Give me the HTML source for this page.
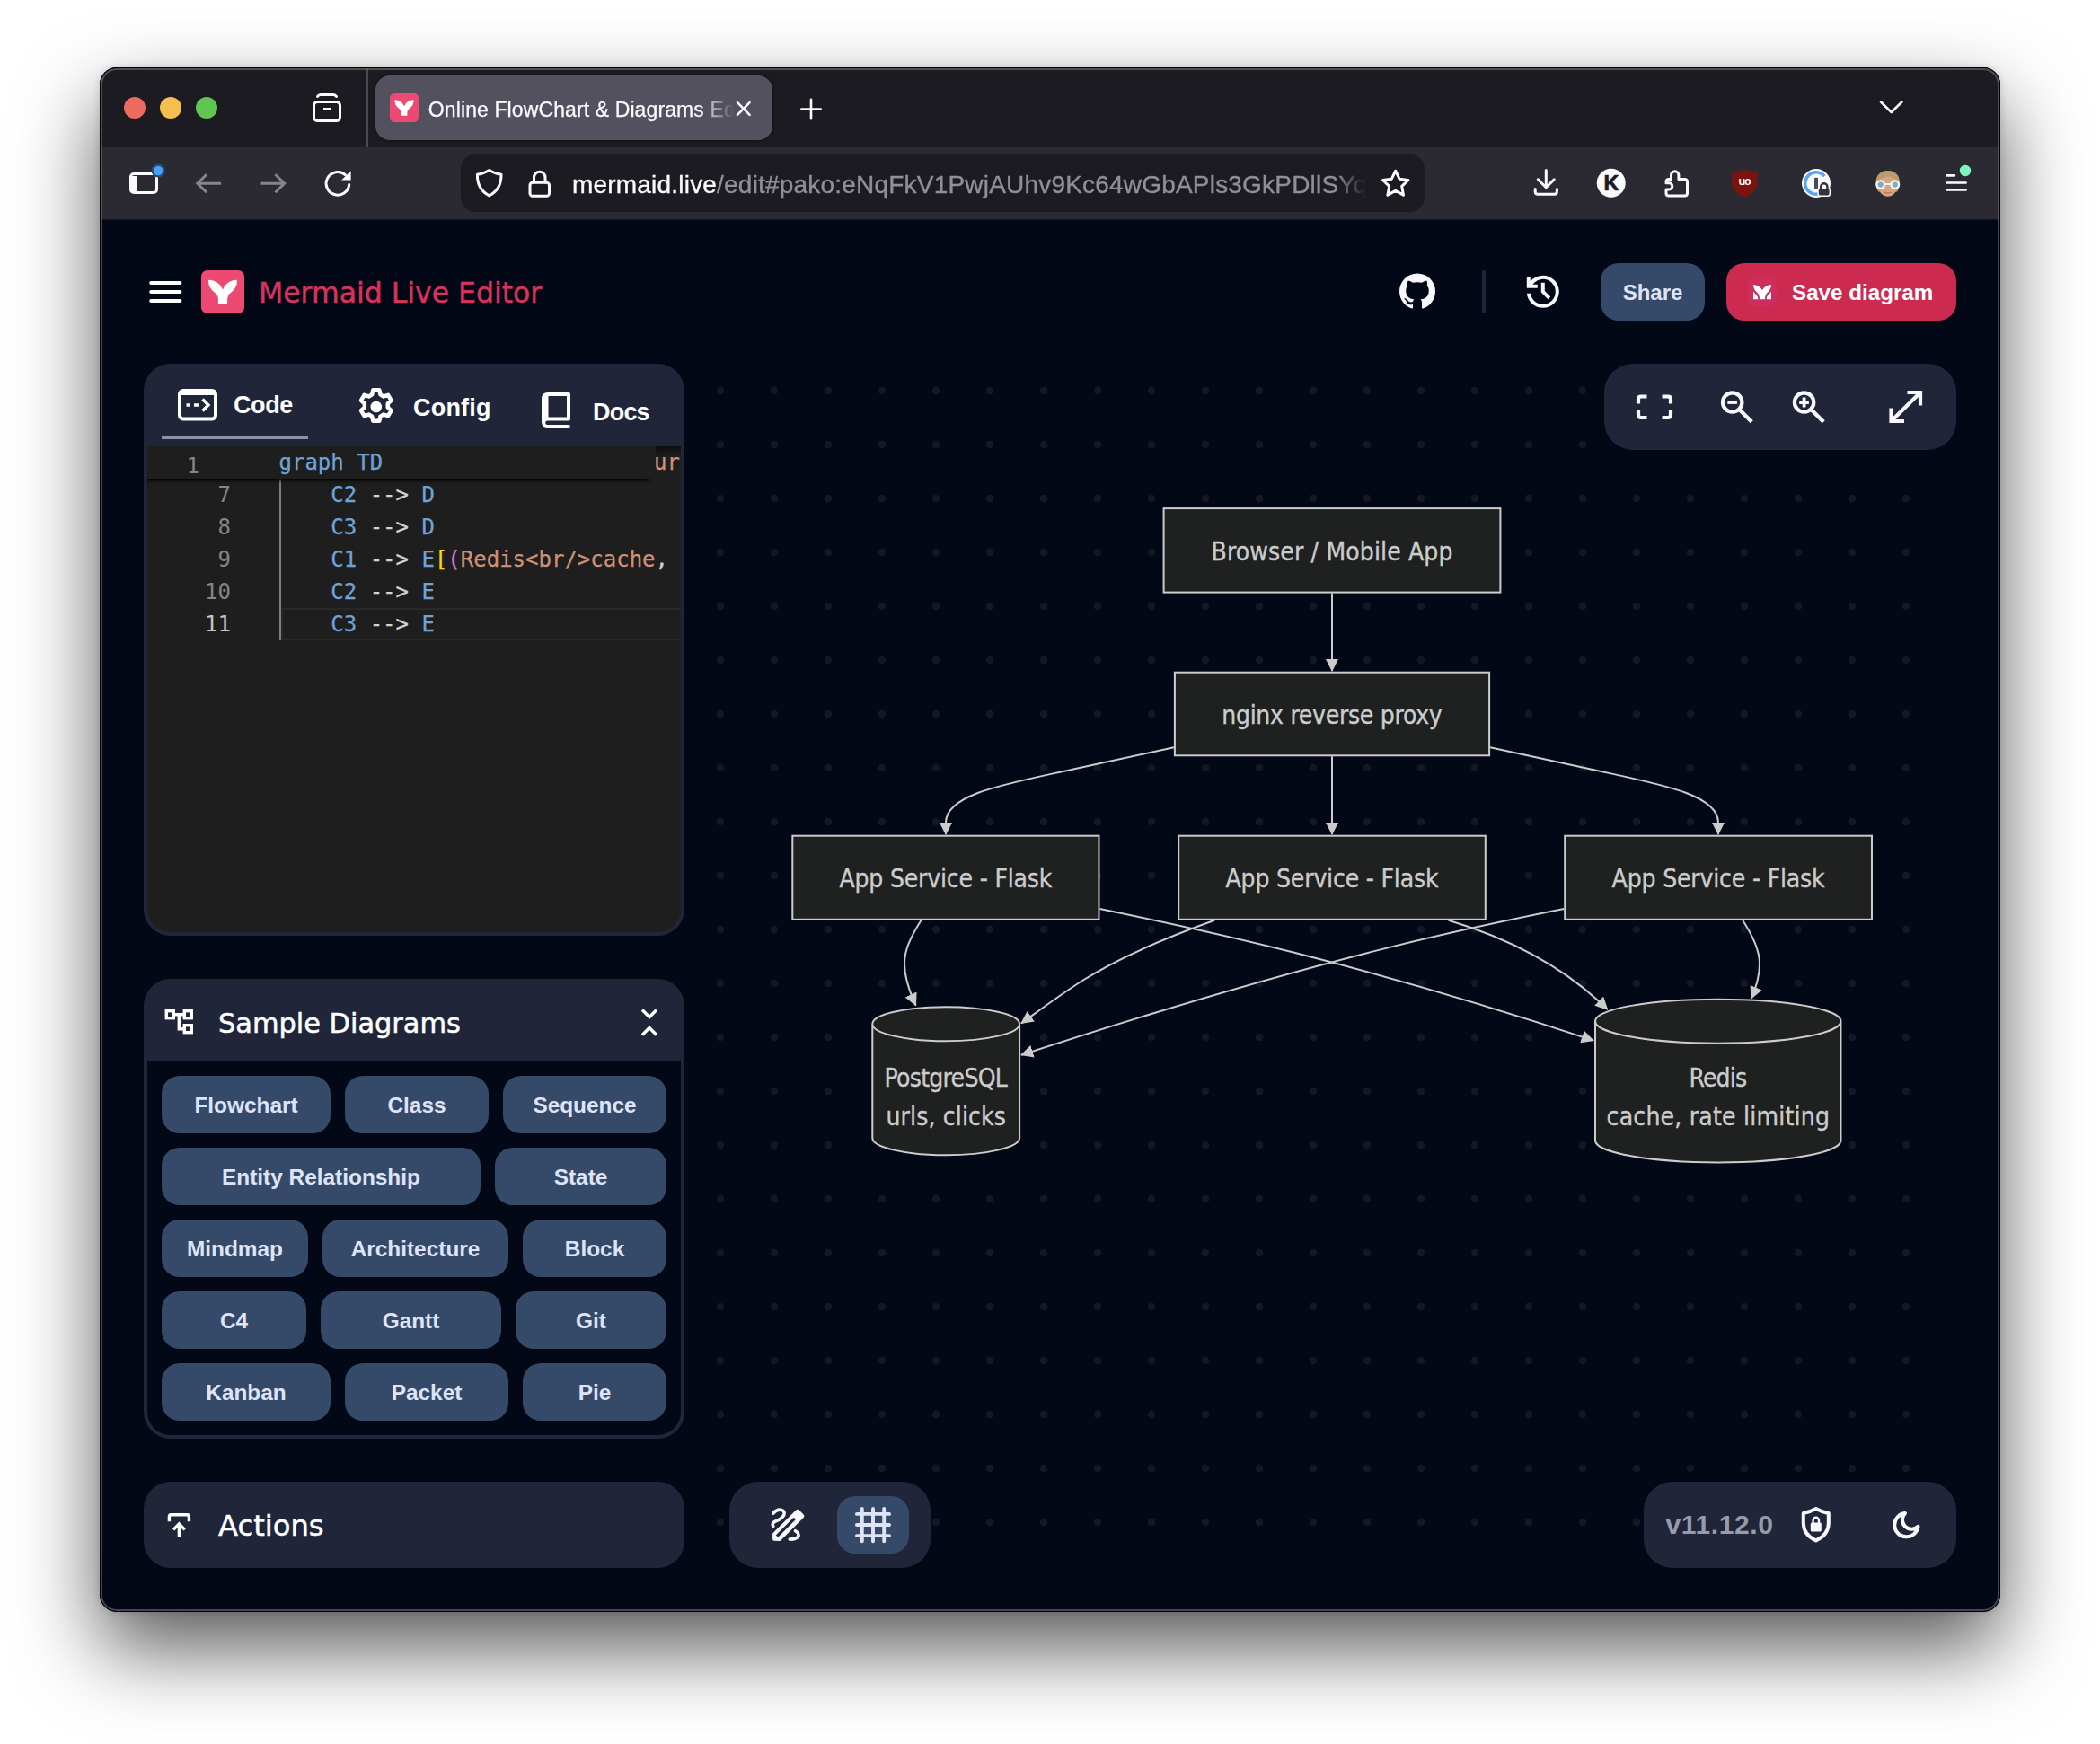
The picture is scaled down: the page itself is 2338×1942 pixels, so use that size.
<!DOCTYPE html>
<html lang="en">
<head>
<meta charset="utf-8">
<title>Online FlowChart &amp; Diagrams Editor - Mermaid Live Editor</title>
<style>
*{box-sizing:border-box;margin:0;padding:0}
html,body{width:2338px;height:1942px;overflow:hidden;background:#fff}
body{position:relative;font-family:"Liberation Sans",sans-serif;color:#fff}
.abs{position:absolute}
svg{position:absolute;overflow:visible}
/* window */
#shadow{left:111px;top:75px;width:2116px;height:1720px;border-radius:19px;
  box-shadow:0 41px 90px rgba(0,0,0,.65),0 0 8px rgba(0,0,0,.15);}
#win{left:0;top:0;width:2338px;height:1942px;clip-path:inset(75px 111px 147px 111px round 19px);background:#030817}
#ring{left:111px;top:75px;width:2116px;height:1720px;border-radius:19px;border:1px solid #000;box-shadow:inset 0 0 0 2px rgba(120,120,132,.55);pointer-events:none}
/* browser chrome */
#tabbar{left:111px;top:75px;width:2116px;height:89px;background:#1c1b22}
#toolbar{left:111px;top:164px;width:2116px;height:81px;background:#2b2a33;border-bottom:1px solid #16151b}
.tl{width:24px;height:24px;border-radius:50%;top:108px}
#tab{left:418px;top:84px;width:442px;height:72px;border-radius:16px;background:#52515d;box-shadow:0 0 4px rgba(0,0,0,.5)}
#tabtitle{left:476.800px;top:105.500px;width:343px;height:32px;font-size:23px;line-height:32px;letter-spacing:.110px;white-space:nowrap;overflow:hidden;color:#fbfbfe;-webkit-text-stroke:.250px #fbfbfe;
  -webkit-mask-image:linear-gradient(90deg,#000 0,#000 298px,rgba(0,0,0,.12) 336px,transparent 340px);mask-image:linear-gradient(90deg,#000 0,#000 298px,rgba(0,0,0,.12) 336px,transparent 340px)}
#urlbar{left:513px;top:172px;width:1073px;height:64px;border-radius:16px;background:#1c1b22}
#url{left:637px;top:185.600px;width:886px;height:40px;font-size:28px;line-height:40px;letter-spacing:.200px;white-space:nowrap;overflow:hidden;color:#8f8f99;-webkit-text-stroke:.350px currentColor;
  -webkit-mask-image:linear-gradient(90deg,#000 0,#000 850px,transparent 884px);mask-image:linear-gradient(90deg,#000 0,#000 850px,transparent 884px)}
#url b{font-weight:400;color:#fbfbfe;-webkit-text-stroke:.350px #fbfbfe}
/* app header */
#title{left:288px;top:302.200px;-webkit-text-stroke:.450px #d7335c;height:48px;line-height:48px;font-family:"DejaVu Sans","Liberation Sans",sans-serif;font-size:31.5px;color:#d7335c;white-space:nowrap}
.btn{border-radius:20px;background:#354a69;color:#dee3f7;font-family:"Liberation Sans",sans-serif;font-weight:700;font-size:24.400px;text-align:center;white-space:nowrap}

/* panels */
.panel{background:#20253a;border-radius:30px}
.tabtxt{font-family:"Liberation Sans",sans-serif;font-weight:700;font-size:27px;line-height:40px;height:40px;color:#fff;white-space:nowrap}
#editor{left:164px;top:497px;width:594px;height:541px;background:#1e1e1e;border-radius:0 0 26px 26px;overflow:hidden;font-family:"DejaVu Sans Mono","Liberation Mono",monospace;font-size:24px}
#editor .ln{position:absolute;left:0;width:93px;text-align:right;height:36px;line-height:37.600px;color:#858585}
#editor .cl{position:absolute;left:146.500px;height:36px;line-height:37.600px;white-space:pre;color:#d4d4d4;-webkit-text-stroke:.250px currentColor}
.k{color:#6ea3d8;-webkit-text-stroke:.250px #6ea3d8}.s{color:#ce9178;-webkit-text-stroke:.250px #ce9178}.y{color:#ffd700}.m{color:#da70d6}
#sticky{left:0;top:0;width:566px;height:36px;background:#1e1e1e;box-shadow:-6px 4px 4px -2px #000}
.ptitle{font-family:"DejaVu Sans","Liberation Sans",sans-serif;font-size:30.400px;line-height:48px;height:48px;color:#fff;white-space:nowrap;-webkit-text-stroke:.500px #fff}
.sbtn{height:64px;line-height:66.400px}

/* diagram pane */
#dots{left:772px;top:405px;width:1380px;height:1320px;background-image:radial-gradient(circle at 30px 30px,#161724 0,#161724 3.700px,rgba(22,23,36,0) 4.600px);background-size:60px 60px}
.pill{background:#20253a;border-radius:32px}
#diagram text{font-family:"DejaVu Sans Condensed","Liberation Sans",sans-serif;font-size:28px;fill:#ccc;text-anchor:middle;stroke:#ccc;stroke-width:.350px}
#diagram .node{fill:#1f2020;stroke:#ccc;stroke-width:2}
#diagram .edge{fill:none;stroke:#ccc;stroke-width:2}
#ver{left:1854.500px;top:1674px;height:48px;line-height:48px;font-family:"Liberation Sans",sans-serif;font-weight:700;font-size:30px;letter-spacing:.600px;color:#979cad;white-space:nowrap}
</style>
</head>
<body>
<div id="shadow" class="abs"></div>
<div id="win" class="abs">
  <!-- ===== browser chrome ===== -->
  <div id="tabbar" class="abs"></div>
  <div id="toolbar" class="abs"></div>
  <div class="abs tl" style="left:138px;background:#ed6a5e"></div>
  <div class="abs tl" style="left:178px;background:#f5bf4f"></div>
  <div class="abs tl" style="left:218px;background:#61c554"></div>
  <div class="abs" style="left:408px;top:75px;width:2px;height:89px;background:#4b4a54"></div>
  <div id="tab" class="abs"></div>
  <div id="tabtitle" class="abs">Online FlowChart &amp; Diagrams Editor - Mermaid Live Editor</div>
  <div id="urlbar" class="abs"></div>
  <div id="url" class="abs"><b>mermaid.live</b>/edit#pako:eNqFkV1PwjAUhv9Kc64wGbAPls3GkPDllSYqXlmaspXNbWxnBY2x/91mM4kX</div>
  
  <svg id="chrome-icons" width="2338" height="1942" viewBox="0 0 2338 1942" fill="none" stroke="#fbfbfe" stroke-width="3" stroke-linecap="round" stroke-linejoin="round">
    <!-- firefox view -->
    <rect x="349.5" y="113.5" width="29" height="21" rx="4"/>
    <path d="M353.5 107.5q1.2-2 3.5-2h14q2.3 0 3.5 2" />
    <path d="M360 121.500h8" stroke-linecap="butt"/>
    <!-- tab favicon -->
    <rect x="434" y="104" width="32" height="32" rx="5" fill="#ec4a72" stroke="none"/>
    <path transform="translate(434,104) scale(0.065285)" fill="#fff" stroke="none" d="M407.48,111.18A165.2,165.2,0,0,0,245.08,220,165.2,165.2,0,0,0,82.68,111.18a165.5,165.5,0,0,0,72.06,143.64,88.81,88.81,0,0,1,38.53,73.45v50.86H296.9V328.27a88.8,88.8,0,0,1,38.52-73.45,165.41,165.41,0,0,0,72.06-143.64Z"/>
    <!-- tab close / new tab / list tabs -->
    <path d="M821 114.200l13.600 13.600M834.600 114.200l-13.600 13.600" stroke-width="2.600"/>
    <path d="M892.300 121.500h21.400M903 110.800v21.400" stroke-width="2.600"/>
    <path d="M2094 113.500l11.700 11.500l11.700-11.500" stroke-width="2.6"/>
    <!-- sidebar -->
    <rect x="145.500" y="193.500" width="29" height="21" rx="3.500" />
    <path d="M145 196h7v17h-7z" fill="#fbfbfe" stroke="none"/>
    <circle cx="176.200" cy="190" r="7.600" fill="#2b4a68" stroke="none"/>
    <circle cx="176.200" cy="190" r="5.200" fill="#45a1ff" stroke="none"/>
    <!-- back / forward -->
    <g stroke="#86858e">
      <path d="M246 204.300h-26M230 194.300l-10.200 10l10.200 10" stroke-linecap="butt" stroke-linejoin="miter"/>
      <path d="M290.500 204.300h26M306.500 194.300l10.200 10l-10.200 10" stroke-linecap="butt" stroke-linejoin="miter"/>
    </g>
    <!-- reload -->
    <path d="M388.700 205.500a12.800 12.800 0 1 1-4.400-10.900"/>
    <path d="M390.600 190.200v10.200h-10.400z" fill="#fbfbfe" stroke="none"/>
    <!-- shield -->
    <path d="M544.700 189.500q7.500 4.200 13.300 4.700q.4 16.500-13.300 23.600q-13.700-7.100-13.300-23.600q5.800-.5 13.300-4.700z"/>
    <!-- lock -->
    <rect x="590" y="203.300" width="21.500" height="15" rx="3"/>
    <path d="M594.500 203v-5.500a6.200 6.200 0 0 1 12.500 0v5.500"/>
    <!-- star -->
    <path d="M1553.700 190.200l4.300 9l9.900 1.300l-7.200 6.900l1.800 9.800l-8.800-4.800l-8.800 4.800l1.800-9.800l-7.200-6.900l9.900-1.300z"/>
    <!-- download -->
    <path d="M1721.300 189.500v18.500M1712.300 199.800l9 9l9-9M1709.200 210.500v2.700q0 3 3 3h18.200q3 0 3-3v-2.700"/>
    <!-- K -->
    <circle cx="1793.700" cy="203.700" r="16" fill="#fbfbfe" stroke="none"/>
    <text x="1793.900" y="212" style="font:700 23.500px 'Liberation Sans',sans-serif" text-anchor="middle" fill="#1c1b22" stroke="#1c1b22" stroke-width=".700">K</text>
    <!-- extensions puzzle -->
    <path d="M1860.500 199.500v-4.500a4.200 4.200 0 0 1 8.400 0v4.500h6.600q3 0 3 3v12.500q0 3-3 3h-17.500q-3 0-3-3v-4h3.200a3.600 3.600 0 0 0 0-7.200h-3.200v-1.300q0-3 3-3z"/>
    <!-- uBlock -->
    <path d="M1942.200 187.800q4.500 3.600 14.200 4.500v12.200q-1 9.500-14.200 15.300q-13.200-5.800-14.200-15.300v-12.200q9.700-.900 14.200-4.500z" fill="#7b130e" stroke="none"/>
    <text x="1942" y="206.400" style="font:700 12.500px 'Liberation Sans',sans-serif;letter-spacing:-1.200px" text-anchor="middle" fill="#fff" stroke="none">uo</text>
    <!-- 1password-like -->
    <circle cx="2022" cy="204" r="16" fill="#fbfbfe" stroke="none"/>
    <path d="M2031.300 196.200a12.200 12.200 0 1 0-4.300 18.900" stroke="#5aa2f5" stroke-width="3.400" stroke-linecap="butt"/>
    <rect x="2020" y="197.900" width="4" height="12.300" fill="#4b4b52" stroke="none"/>
    <path d="M2027.200 210v-2.200a3.600 3.600 0 0 1 7.200 0v2.200" stroke="#fbfbfe" stroke-width="5.400"/>
    <rect x="2023.400" y="208.600" width="14.600" height="10.400" rx="3" fill="#fbfbfe" stroke="none"/>
    <path d="M2027.200 210v-2.200a3.600 3.600 0 0 1 7.200 0v2.200" stroke="#343338" stroke-width="2.400"/>
    <rect x="2024.800" y="210" width="11.800" height="7.600" rx="1.800" fill="#343338" stroke="none"/>
    <!-- avatar -->
    <path d="M2101.700 190c8.500 0 13.200 5.500 13.200 13c0 4-1.200 7.500-2.600 10.500h-21.200c-1.400-3-2.600-6.500-2.600-10.500c0-7.500 4.700-13 13.200-13z" fill="#b89c72" stroke="none"/>
    <path d="M2101.700 196.500c6.500 0 10.800 3.500 10.800 9.500c0 7-4.600 12.800-10.800 12.800s-10.800-5.800-10.800-12.800c0-6 4.300-9.500 10.800-9.500z" fill="#d9a47f" stroke="none"/>
    <path d="M2092 199q7-1.500 12-7q4 5.500 9 7.500q-3-9.500-11.300-9.500q-8.200 0-9.700 9z" fill="#b89c72" stroke="none"/>
    <path d="M2098 214.200q3.700 1.800 7.400 0" stroke="#b5785c" stroke-width="1.300"/>
    <circle cx="2093.700" cy="205.600" r="4.300" fill="#86aab8" stroke="#f4f8fa" stroke-width="2.300"/>
    <circle cx="2109.800" cy="205.600" r="4.300" fill="#86aab8" stroke="#f4f8fa" stroke-width="2.300"/>
    <path d="M2098.600 205h6.300" stroke="#f4f8fa" stroke-width="1.800"/>
    <!-- menu -->
    <path d="M2167.400 195.400h8.500M2167.400 203.500h21.200M2167.400 211.500h21.200" stroke-width="2.700"/>
    <circle cx="2188" cy="190" r="6.200" fill="#7df5bd" stroke="none"/>
  </svg>

  <!-- ===== app header ===== -->
  <div id="title" class="abs">Mermaid Live Editor</div>
  
  <svg id="header-icons" width="2338" height="1942" viewBox="0 0 2338 1942" fill="none">
    <path d="M168.300 315h32M168.300 325h32M168.300 335h32" stroke="#fff" stroke-width="4.200" stroke-linecap="round"/>
    <rect x="224" y="301" width="48" height="48" rx="6.800" fill="#ec4a72"/>
    <path transform="translate(224,301) scale(0.097927)" fill="#fff" d="M407.48,111.18A165.2,165.2,0,0,0,245.08,220,165.2,165.2,0,0,0,82.68,111.18a165.5,165.5,0,0,0,72.06,143.64,88.81,88.81,0,0,1,38.53,73.45v50.86H296.9V328.27a88.8,88.8,0,0,1,38.52-73.45,165.41,165.41,0,0,0,72.06-143.64Z"/>
    <path transform="translate(1554,300.500) scale(2)" fill="#f8f8fc" d="M12,2A10,10 0 0,0 2,12C2,16.42 4.87,20.17 8.84,21.5C9.34,21.58 9.5,21.27 9.5,21C9.5,20.77 9.5,20.14 9.5,19.31C6.73,19.91 6.14,17.97 6.14,17.97C5.68,16.81 5.03,16.5 5.03,16.5C4.12,15.88 5.1,15.9 5.1,15.9C6.1,15.97 6.63,16.93 6.63,16.93C7.5,18.45 8.97,18 9.54,17.76C9.63,17.11 9.89,16.67 10.17,16.42C7.95,16.17 5.62,15.31 5.62,11.5C5.62,10.39 6,9.5 6.65,8.79C6.55,8.54 6.2,7.5 6.75,6.15C6.75,6.15 7.59,5.88 9.5,7.17C10.29,6.95 11.15,6.84 12,6.84C12.85,6.84 13.71,6.95 14.5,7.17C16.41,5.88 17.25,6.15 17.25,6.15C17.8,7.5 17.45,8.54 17.35,8.79C18,9.5 18.38,10.39 18.38,11.5C18.38,15.32 16.04,16.16 13.81,16.41C14.17,16.72 14.5,17.33 14.5,18.26C14.5,19.6 14.5,20.68 14.5,21C14.5,21.27 14.66,21.59 15.17,21.5C19.14,20.16 22,16.42 22,12A10,10 0 0,0 12,2Z"/>
    <path d="M1652 303v44" stroke="#20253a" stroke-width="4" stroke-linecap="round"/>
    <path transform="translate(1693.800,300.800) scale(2)" fill="#f8f8fc" d="M12 21q-3.450 0-6.012-2.287T3.050 13H5.100q.350 2.600 2.313 4.300T12 19q2.925 0 4.963-2.037T19 12t-2.037-4.962T12 5q-1.725 0-3.225.800T6.250 8H9v2H3V4h2v2.350q1.275-1.600 3.113-2.475T12 3q1.875 0 3.513.713t2.850 1.924t1.925 2.850T21 12t-.712 3.513t-1.925 2.850t-2.850 1.925T12 21m2.800-4.800L11 12.400V7h2v4.600l3.200 3.200z"/>
  </svg>
  <div class="abs btn" style="left:1782px;top:293px;width:116px;height:64px;line-height:65.400px;font-size:24px">Share</div>
  <div class="abs btn" style="left:1922px;top:293px;width:256px;height:64px;line-height:65.400px;background:#cd2a50;color:#fff;text-align:left;padding-left:73px;font-size:24.200px">Save diagram</div>
  <svg width="32" height="32" viewBox="0 0 32 32" style="left:1946px;top:309px">
    <rect width="32" height="32" rx="6.500" fill="#cc2e5e"/>
    <g transform="translate(6,8)" fill="#fff">
      <path d="M0 0q6.500 .600 10 6q3.500-5.400 10-6q-.300 5.500-4.200 8.800q-2.500 2.200-2.700 5.200v2.200h-6.200v-2.200q-.200-3-2.700-5.200q-3.900-3.300-4.200-8.800z"/>
      <path d="M0 7.600q.900 1.500 2.500 2.900q2.600 2.300 2.700 4.700v1h-5.200z"/>
      <path d="M20 7.600q-.900 1.500-2.500 2.900q-2.600 2.300-2.700 4.700v1h5.200z"/>
    </g>
  </svg>

  
  <!-- ===== editor panel ===== -->
  <div class="abs panel" style="left:160px;top:405px;width:602px;height:637px"></div>
  <div class="abs tabtxt" style="left:260px;top:431px;letter-spacing:-.400px">Code</div>
  <div class="abs tabtxt" style="left:460px;top:433.500px;letter-spacing:.200px">Config</div>
  <div class="abs tabtxt" style="left:660px;top:438.500px;letter-spacing:-.800px">Docs</div>
  <div class="abs" style="left:180px;top:485px;width:163px;height:4px;background:#8c91a8"></div>
  <div id="editor" class="abs">
    <div class="ln" style="top:36px">7</div><div class="cl" style="top:36px"><span class="k">    C2</span> --&gt; <span class="k">D</span></div>
    <div class="ln" style="top:72px">8</div><div class="cl" style="top:72px"><span class="k">    C3</span> --&gt; <span class="k">D</span></div>
    <div class="ln" style="top:108px">9</div><div class="cl" style="top:108px"><span class="k">    C1</span> --&gt; <span class="k">E</span><span class="y">[</span><span class="m">(</span><span class="s">Redis&lt;br/&gt;cache</span>, <span class="s">rate limiting</span><span class="m">)</span><span class="y">]</span></div>
    <div class="ln" style="top:144px">10</div><div class="cl" style="top:144px"><span class="k">    C2</span> --&gt; <span class="k">E</span></div>
    <div class="abs" style="left:149px;top:180px;width:460px;height:36px;border:2px solid #282828"></div>
    <div class="ln" style="top:180px;color:#c6c6c6">11</div><div class="cl" style="top:180px"><span class="k">    C3</span> --&gt; <span class="k">E</span></div>
    <div class="abs" style="left:146.500px;top:36px;width:2px;height:180px;background:#7c7c7c"></div>
    <div class="abs" style="left:566px;top:0;width:28px;height:12px;background:linear-gradient(#0e0e0e,#1e1e1e)"></div><div class="cl" style="top:0;left:564px"><span class="s">ur</span></div>
    <div id="sticky" class="abs"><div class="ln" style="top:4px;width:58px;left:0">1</div><div class="cl" style="top:0"><span class="k">graph TD</span></div></div>
  </div>
  <!-- ===== sample diagrams panel ===== -->
  <div class="abs panel" style="left:160px;top:1090px;width:602px;height:512px"></div>
  <div class="abs" style="left:164px;top:1182px;width:594px;height:416px;background:#030817;border-radius:0 0 26px 26px"></div>
  <div class="abs ptitle" style="left:243px;top:1115.500px">Sample Diagrams</div>
  <div class="abs btn sbtn" style="left:180px;top:1198px;width:188px">Flowchart</div>
  <div class="abs btn sbtn" style="left:384px;top:1198px;width:160px">Class</div>
  <div class="abs btn sbtn" style="left:560px;top:1198px;width:182px">Sequence</div>
  <div class="abs btn sbtn" style="left:180px;top:1278px;width:355px">Entity Relationship</div>
  <div class="abs btn sbtn" style="left:551px;top:1278px;width:191px">State</div>
  <div class="abs btn sbtn" style="left:180px;top:1358px;width:163px">Mindmap</div>
  <div class="abs btn sbtn" style="left:359px;top:1358px;width:207px">Architecture</div>
  <div class="abs btn sbtn" style="left:582px;top:1358px;width:160px">Block</div>
  <div class="abs btn sbtn" style="left:180px;top:1438px;width:161px">C4</div>
  <div class="abs btn sbtn" style="left:357px;top:1438px;width:201px">Gantt</div>
  <div class="abs btn sbtn" style="left:574px;top:1438px;width:168px">Git</div>
  <div class="abs btn sbtn" style="left:180px;top:1518px;width:188px">Kanban</div>
  <div class="abs btn sbtn" style="left:384px;top:1518px;width:182px">Packet</div>
  <div class="abs btn sbtn" style="left:582px;top:1518px;width:160px">Pie</div>

  <!-- ===== actions panel ===== -->
  <div class="abs panel" style="left:160px;top:1650px;width:602px;height:96px"></div>
  <div class="abs ptitle" style="left:243px;top:1675px;font-size:32.200px">Actions</div>
  <svg id="left-icons" width="2338" height="1942" viewBox="0 0 2338 1942" fill="none" stroke="#fff" stroke-width="4" stroke-linecap="round" stroke-linejoin="round">
    <!-- code icon -->
    <rect x="200" y="435" width="40" height="31.500" rx="4"/><path d="M200 437.500h40" stroke-width="5" stroke-linecap="butt"/>
    <path d="M207.500 451h4.500M216 451h5M225.500 444.500l6.500 6.500l-6.500 6.500" stroke-width="3.400" stroke-linecap="butt" stroke-linejoin="miter"/>
    <!-- gear -->
    <g transform="translate(418.800,453) scale(1.070)">
      <path id="gearp" stroke-width="4.200" d="M-3.300-17.500h6.600l1.100 4.800l3.300 1.900l4.700-1.500l3.300 5.700l-3.600 3.300v3.800l3.600 3.300l-3.300 5.700l-4.700-1.500l-3.300 1.900l-1.100 4.800h-6.600l-1.100-4.800l-3.300-1.900l-4.700 1.500l-3.300-5.700l3.600-3.300v-3.800l-3.600-3.300l3.300-5.700l4.700 1.500l3.300-1.900z"/>
      <circle r="5.900" fill="#fff" stroke="none"/>
    </g>
    <!-- book -->
    <path d="M605 470.500v-26.500q0-5 5-5h23v27.500h-23.500a4.300 4.300 0 0 0 0 8.600h23.500"/><path d="M608.500 441v25" stroke-linecap="butt"/>
    <!-- sample icon -->
    <g stroke-width="3.400" stroke-linejoin="miter" stroke-linecap="butt">
      <rect x="185.300" y="1125.700" width="8" height="8"/>
      <rect x="205.300" y="1125.700" width="8" height="8"/>
      <rect x="205.300" y="1141.700" width="8" height="8"/>
      <path d="M193.300 1129.700h12M199.300 1129.700v16h6"/>
    </g>
    <!-- collapse chevrons -->
    <path d="M715 1124.500l8 8l8-8M715 1152.500l8-8l8 8" stroke-width="3.400" stroke-linecap="butt" stroke-linejoin="miter"/>
    <!-- actions icon -->
    <path d="M188.400 1694.300v-5.500q0-2 2-2h18q2 0 2 2v5.500M199.400 1711v-14M193 1703.400l6.400-6.400l6.400 6.400" stroke-width="3.400" stroke-linecap="butt" stroke-linejoin="miter"/>
  </svg>

  
  <!-- ===== diagram pane ===== -->
  <div id="dots" class="abs"></div>
  <svg id="diagram" width="2338" height="1942" viewBox="0 0 2338 1942">
    <defs>
      <marker id="arrow" viewBox="0 0 10 10" refX="9.300" refY="5" markerUnits="userSpaceOnUse" markerWidth="14.200" markerHeight="14.200" orient="auto"><path d="M0 0L10 5L0 10z" fill="#ccc"/></marker>
    </defs>
    <g marker-end="url(#arrow)">
      <path class="edge" d="M1483,660.600L1483,747"/>
      <path class="edge" d="M1483,842.300L1483,929"/>
      <path class="edge" d="M1306.900,832.200L1195,856.500C1120,873 1053,884 1053,916L1053,929"/>
      <path class="edge" d="M1659.100,832.200L1771,856.500C1846,873 1913,884 1913,916L1913,929"/>
      <path class="edge" d="M1025.500,1024.800C1013,1045 1007,1058 1007,1073C1007,1089 1012,1103 1019.600,1119.500"/>
      <path class="edge" d="M1352.200,1024.800C1290,1047 1240,1070 1205,1092C1180,1108 1160,1123 1137,1139.500"/>
      <path class="edge" d="M1741.200,1012C1640,1032 1470,1066 1137,1174.800"/>
      <path class="edge" d="M1224.500,1012C1326,1033 1500,1068 1774,1158.600"/>
      <path class="edge" d="M1612.600,1024.800C1680,1045 1740,1075 1789.600,1124"/>
      <path class="edge" d="M1940.200,1024.800C1952,1043 1959,1058 1959,1073C1959,1088 1955,1100 1949.800,1111.800"/>
    </g>
    <rect class="node" x="1295.600" y="566.100" width="374.800" height="93.500"/>
    <rect class="node" x="1307.900" y="748.700" width="350.200" height="92.600"/>
    <rect class="node" x="882.300" y="930.700" width="341.200" height="93.100"/>
    <rect class="node" x="1312.200" y="930.700" width="341.600" height="93.100"/>
    <rect class="node" x="1742.200" y="930.700" width="341.800" height="93.100"/>
    <path class="node" d="M971.3,1140.2a81.90,19 0 0 0 163.8,0a81.90,19 0 0 0 -163.8,0l0,127.0a81.90,19 0 0 0 163.8,0l0,-127.0"/>
    <path class="node" d="M1776.0,1137.2a136.75,24.5 0 0 0 273.5,0a136.75,24.5 0 0 0 -273.5,0l0,132.8a136.75,24.5 0 0 0 273.5,0l0,-132.8"/>
    <text x="1483" y="623.500" textLength="269" lengthAdjust="spacing">Browser / Mobile App</text>
    <text x="1483" y="805.500" textLength="245.500" lengthAdjust="spacing">nginx reverse proxy</text>
    <text x="1052.900" y="987.500" textLength="237" lengthAdjust="spacing">App Service - Flask</text>
    <text x="1483" y="987.500" textLength="237" lengthAdjust="spacing">App Service - Flask</text>
    <text x="1913.100" y="987.500" textLength="237" lengthAdjust="spacing">App Service - Flask</text>
    <text x="1053.200" y="1210" textLength="137.200" lengthAdjust="spacing">PostgreSQL</text>
    <text x="1053.200" y="1252.700" textLength="133.500" lengthAdjust="spacing">urls, clicks</text>
    <text x="1912.800" y="1210.300" textLength="64.600" lengthAdjust="spacing">Redis</text>
    <text x="1912.800" y="1253" textLength="248.400" lengthAdjust="spacing">cache, rate limiting</text>
  </svg>
  <!-- pills -->
  <div class="abs pill" style="left:1786px;top:405px;width:392px;height:96px"></div>
  <div class="abs pill" style="left:812px;top:1650px;width:224px;height:96px"></div>
  <div class="abs" style="left:932px;top:1666px;width:80px;height:64px;border-radius:20px;background:#354a69"></div>
  <div class="abs pill" style="left:1830px;top:1650px;width:348px;height:96px"></div>
  <div id="ver" class="abs">v11.12.0</div>
  <svg id="right-icons" width="2338" height="1942" viewBox="0 0 2338 1942" fill="none" stroke="#f8f8fc" stroke-width="4.200" stroke-linecap="butt" stroke-linejoin="round">
    <!-- fit / focus brackets -->
    <path d="M1824 449.500v-5q0-3 3-3h6.500M1850.500 441.500h6.500q3 0 3 3v5M1860 457v5q0 3-3 3h-6.500M1833.500 465h-6.500q-3 0-3-3v-5" stroke-linecap="butt"/>
    <!-- zoom out -->
    <circle cx="1928.700" cy="448" r="10.700"/>
    <path d="M1936.500 456l13.800 13.800" stroke-width="4.400"/>
    <path d="M1923.300 448h10.800" stroke-width="3.800"/>
    <!-- zoom in -->
    <circle cx="2008.600" cy="448" r="10.700"/>
    <path d="M2016.400 456l13.800 13.800" stroke-width="4.400"/>
    <path d="M2003.200 448h10.800M2008.600 442.600v10.800" stroke-width="3.800"/>
    <!-- expand -->
    <path d="M2106.500 468l31-30.500M2123.500 437h14.500v14.500M2105.500 454.500v14.500h14.500" stroke-linejoin="miter"/>
    <!-- grid -->
    <path d="M959.800 1680v36.300M972 1680v36.300M984.200 1680v36.300M953.900 1685.900h36.200M953.900 1698h36.200M953.900 1710.100h36.200" stroke="#dfe3f6" stroke-width="3.900" stroke-linecap="round"/>
    <!-- shield lock -->
    <path d="M2021.800 1680q7.500 4 14 5v11q0 13-14 19.500q-14-6.500-14-19.500v-11q6.500-1 14-5z" stroke-width="4"/>
    <rect x="2015.800" y="1695.500" width="12" height="10" rx="1.500" fill="#f8f8fc" stroke="none"/>
    <path d="M2018.600 1696v-3a3.200 3.200 0 0 1 6.400 0v3" stroke-width="2.400"/>
    <!-- moon -->
    <path d="M2121 1685a13.200 13.200 0 1 0 14.500 14.800a10 10 0 0 1-14.500-14.800z" stroke-width="4"/>
    <!-- pencil draw -->
    <path d="M861.900 1713.900v-5.600l25.300-25.300q.700-.700 1.400 0l4.500 4.500q.700 .700 0 1.400l-25.300 25.300z" fill="#f8f8fc" stroke="#f8f8fc" stroke-width="3.600" stroke-linejoin="round"/>
    <path d="M865 1710.600l19.800-19.800" stroke="#20253a" stroke-width="3.300" stroke-linecap="butt"/>
    <path d="M860.700 1685.200q4.500-5 9.300-3.800q4.600 1.500 2.600 6q-2.300 4-8.400 6.200q-5.600 2.400-3.400 5.800" stroke-width="3.600" stroke-linecap="round"/>
    <path d="M885.500 1704.700q5 3 3 6.500q-2.300 3-9.300 2.900" stroke-width="3.600" stroke-linecap="round"/>
  </svg>

</div>
<div id="ring" class="abs"></div>
</body>
</html>
